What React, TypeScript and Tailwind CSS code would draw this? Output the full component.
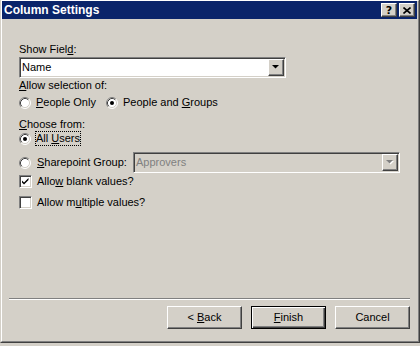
import React from "react";

// classic 3D borders
const raised =
  "border border-t-white border-l-white border-r-[#404040] border-b-[#404040] shadow-[inset_-1px_-1px_0_#808080]";
const sunken =
  "border border-t-[#808080] border-l-[#808080] border-r-white border-b-white shadow-[inset_1px_1px_0_#404040,inset_-1px_-1px_0_#d4d0c8]";

function Radio({ checked }: { checked?: boolean }) {
  return (
    <svg width="12" height="12" viewBox="0 0 12 12" className="shrink-0">
      <circle cx="6" cy="6" r="5" fill="white" />
      <path d="M2.11 9.89 A5.5 5.5 0 0 1 9.89 2.11" fill="none" stroke="#808080" />
      <path d="M9.89 2.11 A5.5 5.5 0 0 1 2.11 9.89" fill="none" stroke="#ffffff" />
      <path d="M2.82 9.18 A4.5 4.5 0 0 1 9.18 2.82" fill="none" stroke="#404040" />
      <path d="M9.18 2.82 A4.5 4.5 0 0 1 2.82 9.18" fill="none" stroke="#d4d0c8" />
      {checked && <circle cx="6" cy="6" r="2" fill="black" />}
    </svg>
  );
}

function Checkbox({ checked }: { checked?: boolean }) {
  return (
    <div className={`w-[13px] h-[13px] bg-white shrink-0 flex items-center justify-center ${sunken}`}>
      {checked && (
        <svg width="9" height="9" viewBox="0 0 9 9">
          <path d="M1 3.5 L3 5.5 L7.5 1 L7.5 3 L3 7.5 L1 5.5 Z" fill="black" />
        </svg>
      )}
    </div>
  );
}

function Arrow({ disabled }: { disabled?: boolean }) {
  return (
    <svg width="8" height="5" viewBox="0 0 8 5">
      {disabled && <path d="M1 1 H8 L4.5 4.5 Z" fill="white" />}
      <path d="M0 0 H7 L3.5 3.5 Z" fill={disabled ? "#808080" : "black"} />
    </svg>
  );
}

function Combo({ value, disabled }: { value: string; disabled?: boolean }) {
  return (
    <div
      className={`w-[267px] h-[21px] flex items-center ${sunken} ${
        disabled ? "bg-[#d4d0c8] text-[#808080]" : "bg-white text-black"
      }`}
    >
      <span className="flex-1 pl-[2px] leading-[13px]">{value}</span>
      <div className={`w-[16px] h-[17px] mr-[1px] bg-[#d4d0c8] flex items-center justify-center ${raised}`}>
        <Arrow disabled={disabled} />
      </div>
    </div>
  );
}

function Button({ children, isDefault }: { children: React.ReactNode; isDefault?: boolean }) {
  return (
    <div
      className={`w-[75px] h-[23px] bg-[#d4d0c8] flex items-center justify-center leading-[13px] ${
        isDefault
          ? "border border-black shadow-[inset_1px_1px_0_#ffffff,inset_-1px_-1px_0_#404040,inset_-2px_-2px_0_#808080]"
          : raised
      }`}
    >
      <span>{children}</span>
    </div>
  );
}

export default function App() {
  return (
    <div className="w-[420px] h-[346px] bg-[#d4d0c8] text-[11px] text-black font-['Liberation_Sans',Arial,sans-serif] select-none">
      <div className="w-[420px] h-[343px] border-l border-l-[#d4d0c8] border-r border-r-[#404040] border-b border-b-[#404040]">
        <div className="h-full flex flex-col border-t border-t-white border-l border-l-white border-r border-r-[#808080] border-b border-b-[#808080] pr-[1px]">
          {/* Title bar */}
          <div className="h-[18px] bg-[#0a246a] flex items-center pl-[2px] pr-[2px]">
            <span className="flex-1 text-white font-bold text-[12px] leading-[14px]">Column Settings</span>
            <div className={`w-[16px] h-[14px] bg-[#d4d0c8] flex items-center justify-center ${raised}`}>
              <span className="font-bold text-[11px] leading-[11px] font-['DejaVu_Sans',sans-serif]">?</span>
            </div>
            <div className={`w-[16px] h-[14px] ml-[2px] bg-[#d4d0c8] flex items-center justify-center ${raised}`}>
              <svg width="8" height="7" viewBox="0 0 8 7">
                <path d="M0.5 0.5 L7.5 6.5 M7.5 0.5 L0.5 6.5" stroke="black" strokeWidth="1.6" />
              </svg>
            </div>
          </div>

          {/* Content */}
          <div className="flex-1 flex flex-col pl-[17px] leading-[13px]">
            <div className="mt-[24px] h-[13px]">
              Show Fiel<u>d</u>:
            </div>
            <div className="mt-[1px]">
              <Combo value="Name" />
            </div>
            <div className="mt-[1px] h-[13px]">
              <u>A</u>llow selection of:
            </div>
            <div className="mt-[4px] h-[13px] flex items-center">
              <div className="w-[87px] flex items-center">
                <Radio />
                <span className="ml-[5px]">
                  <u>P</u>eople Only
                </span>
              </div>
              <Radio checked />
              <span className="ml-[5px]">
                People and <u>G</u>roups
              </span>
            </div>
            <div className="mt-[9px] h-[13px]">
              <u>C</u>hoose from:
            </div>
            <div className="mt-[1px] h-[13px] flex items-center">
              <Radio checked />
              <span className="ml-[4px] border border-dotted border-black px-0">
                All <u>U</u>sers
              </span>
            </div>
            <div className="mt-[7px] h-[21px] flex items-center">
              <div className="w-[114px] flex items-center">
                <Radio />
                <span className="ml-[6px]">
                  <u>S</u>harepoint Group:
                </span>
              </div>
              <Combo value="Approvers" disabled />
            </div>
            <div className="mt-[2px] h-[13px] flex items-center">
              <Checkbox checked />
              <span className="ml-[5px]">
                Allo<u>w</u> blank values?
              </span>
            </div>
            <div className="mt-[8px] h-[13px] flex items-center">
              <Checkbox />
              <span className="ml-[5px]">
                Allow m<u>u</u>ltiple values?
              </span>
            </div>
          </div>

          {/* Separator */}
          <div className="mx-[7px] h-[2px] border-t border-t-[#808080] border-b border-b-white" />

          {/* Buttons */}
          <div className="mt-[6px] mb-[12px] pr-[7px] flex justify-end gap-[9px]">
            <Button>
              &lt; <u>B</u>ack
            </Button>
            <Button isDefault>
              <u>F</u>inish
            </Button>
            <Button>Cancel</Button>
          </div>
        </div>
      </div>
    </div>
  );
}
